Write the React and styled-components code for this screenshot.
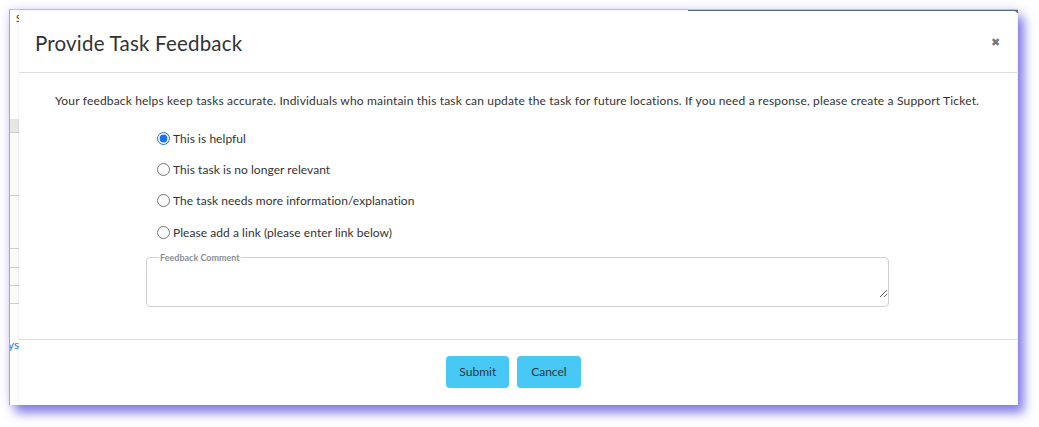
import React from "react";
import styled, { createGlobalStyle } from "styled-components";

const Global = createGlobalStyle`
  html, body { margin: 0; padding: 0; background: #ffffff; }
  body { font-family: "Lato", "Liberation Sans", sans-serif; color: #333; }
  * { box-sizing: border-box; }
`;

const Page = styled.div`
  width: 1039px;
  height: 427px;
  padding: 9px 0 0 9px;
  overflow: hidden;
`;

const Frame = styled.div`
  position: relative;
  width: 1009px;
  height: 396px;
  background: #fff;
  border-left: 1px solid #9aaade;
  border-top: 1px solid #b9c2e6;
  box-shadow: 6px 8px 10px rgba(85, 75, 220, 0.7), 0 0 9px rgba(150, 140, 235, 0.3);
  overflow: hidden;
`;

const Nav = styled.div`
  display: flex;
  align-items: center;
  height: 14px;
  padding-top: 1px;
`;

const NavItem = styled.span`
  font-family: "Lato", sans-serif;
  font-size: 10px;
  letter-spacing: 1px;
  color: ${(p) => (p.$active ? "#6d62d8" : "#333")};
  background: ${(p) => (p.$active ? "#e3e0f7" : "transparent")};
  padding: 0 6px;
  margin-right: ${(p) => p.$gap || 20}px;
  line-height: 12px;
`;

const DarkBar = styled.div`
  position: absolute;
  top: 0;
  right: 0;
  width: 330px;
  height: 3px;
  background: #5b7182;
`;

const Table = styled.div`
  display: flex;
  flex-direction: column;
  margin-top: 95px;
  width: 10px;
`;

const Row = styled.div`
  height: ${(p) => p.$h}px;
  background: ${(p) => p.$bg || "#fafafa"};
  border-bottom: 1px solid #cfcfcf;
`;

const LinkText = styled.div`
  color: #1e7be0;
  font-size: 12px;
  margin-top: 33px;
  margin-left: -2px;
`;

const Modal = styled.div`
  position: absolute;
  left: 9px;
  top: 1px;
  width: 998px;
  height: 394px;
  background: #fff;
  border-radius: 3px;
  display: flex;
  flex-direction: column;
  box-shadow: 0 0 2px rgba(0,0,0,0.15);
`;

const Header = styled.div`
  height: 62px;
  display: flex;
  align-items: center;
  justify-content: space-between;
  padding: 0 17px 0 16px;
  border-bottom: 1px solid #dedede;
`;

const Title = styled.h2`
  margin: 0;
  font-family: "Lato", sans-serif;
  font-weight: 400;
  font-size: 20.5px;
  color: #333;
  letter-spacing: 0.2px;
  transform: translateY(1px);
`;

const Close = styled.button`
  border: none;
  background: none;
  padding: 0;
  font-size: 11px;
  color: #777;
  cursor: pointer;
  line-height: 1;
  transform: translateY(1px);
`;

const Body = styled.div`
  flex: 1;
  display: flex;
  flex-direction: column;
  padding: 20px 0 0 36px;
  border-bottom: 1px solid #dedede;
`;

const Intro = styled.p`
  margin: 0 0 22px 0;
  font-size: 12px;
  color: #333;
  letter-spacing: 0.17px;
`;

const Options = styled.div`
  display: flex;
  flex-direction: column;
  gap: 15.4px;
  padding-left: 102px;
`;

const Option = styled.label`
  display: flex;
  align-items: center;
  font-size: 12px;
  color: #333;
  height: 16px;
  gap: 1px;
  letter-spacing: 0.05px;
`;

const Radio = styled.input`
  margin: 0 2px 0 0;
  width: 13px;
  height: 13px;
  accent-color: #1a73e8;
`;

const Field = styled.fieldset`
  margin: 13px 0 0 91px;
  width: 743px;
  height: 54px;
  padding: 0;
  border: 1px solid #cdd1d6;
  border-radius: 4px;
  display: flex;
`;

const Legend = styled.legend`
  font-size: 9px;
  font-weight: 700;
  color: #8a8f94;
  padding: 0 1px;
  margin-left: 12px;
  line-height: 9px;
`;

const TextArea = styled.textarea`
  flex: 1;
  border: none;
  outline: none;
  resize: both;
  background: transparent;
  margin: 0;
  font-family: inherit;
`;

const Footer = styled.div`
  height: 65px;
  display: flex;
  align-items: center;
  justify-content: center;
  gap: 8px;
  padding: 0 9px 2px 0;
`;

const Button = styled.button`
  height: 32px;
  padding: 0 ${(p) => p.$px || 13}px;
  border: none;
  border-radius: 4px;
  background: #47c8f5;
  color: #2a3640;
  font-family: "Lato", sans-serif;
  font-size: 12px;
  cursor: pointer;
`;

const options = [
  "This is helpful",
  "This task is no longer relevant",
  "The task needs more information/explanation",
  "Please add a link (please enter link below)",
];

export default function App() {
  return (
    <Page>
      <Global />
      <Frame>
        <Nav>
          <NavItem $gap={24}>SHBOARD</NavItem>
          <NavItem $active $gap={22}>TASKS</NavItem>
          <NavItem $gap={24}>REPORTS</NavItem>
          <NavItem>ADMIN</NavItem>
        </Nav>
        <DarkBar />
        <Table>
          <Row $h={14} $bg="#e6e6e6" />
          <Row $h={63} />
          <Row $h={53} />
          <Row $h={19} />
          <Row $h={18} />
          <Row $h={18} />
          <LinkText>ys</LinkText>
        </Table>
        <Modal>
          <Header>
            <Title>Provide Task Feedback</Title>
            <Close aria-label="close">✖</Close>
          </Header>
          <Body>
            <Intro>
              Your feedback helps keep tasks accurate. Individuals who maintain this task can update the task for future locations. If you need a response, please create a Support Ticket.
            </Intro>
            <Options>
              {options.map((o, i) => (
                <Option key={o}>
                  <Radio type="radio" name="fb" defaultChecked={i === 0} />
                  {o}
                </Option>
              ))}
            </Options>
            <Field>
              <Legend>Feedback Comment</Legend>
              <TextArea />
            </Field>
          </Body>
          <Footer>
            <Button $px={13}>Submit</Button>
            <Button $px={14}>Cancel</Button>
          </Footer>
        </Modal>
      </Frame>
    </Page>
  );
}
